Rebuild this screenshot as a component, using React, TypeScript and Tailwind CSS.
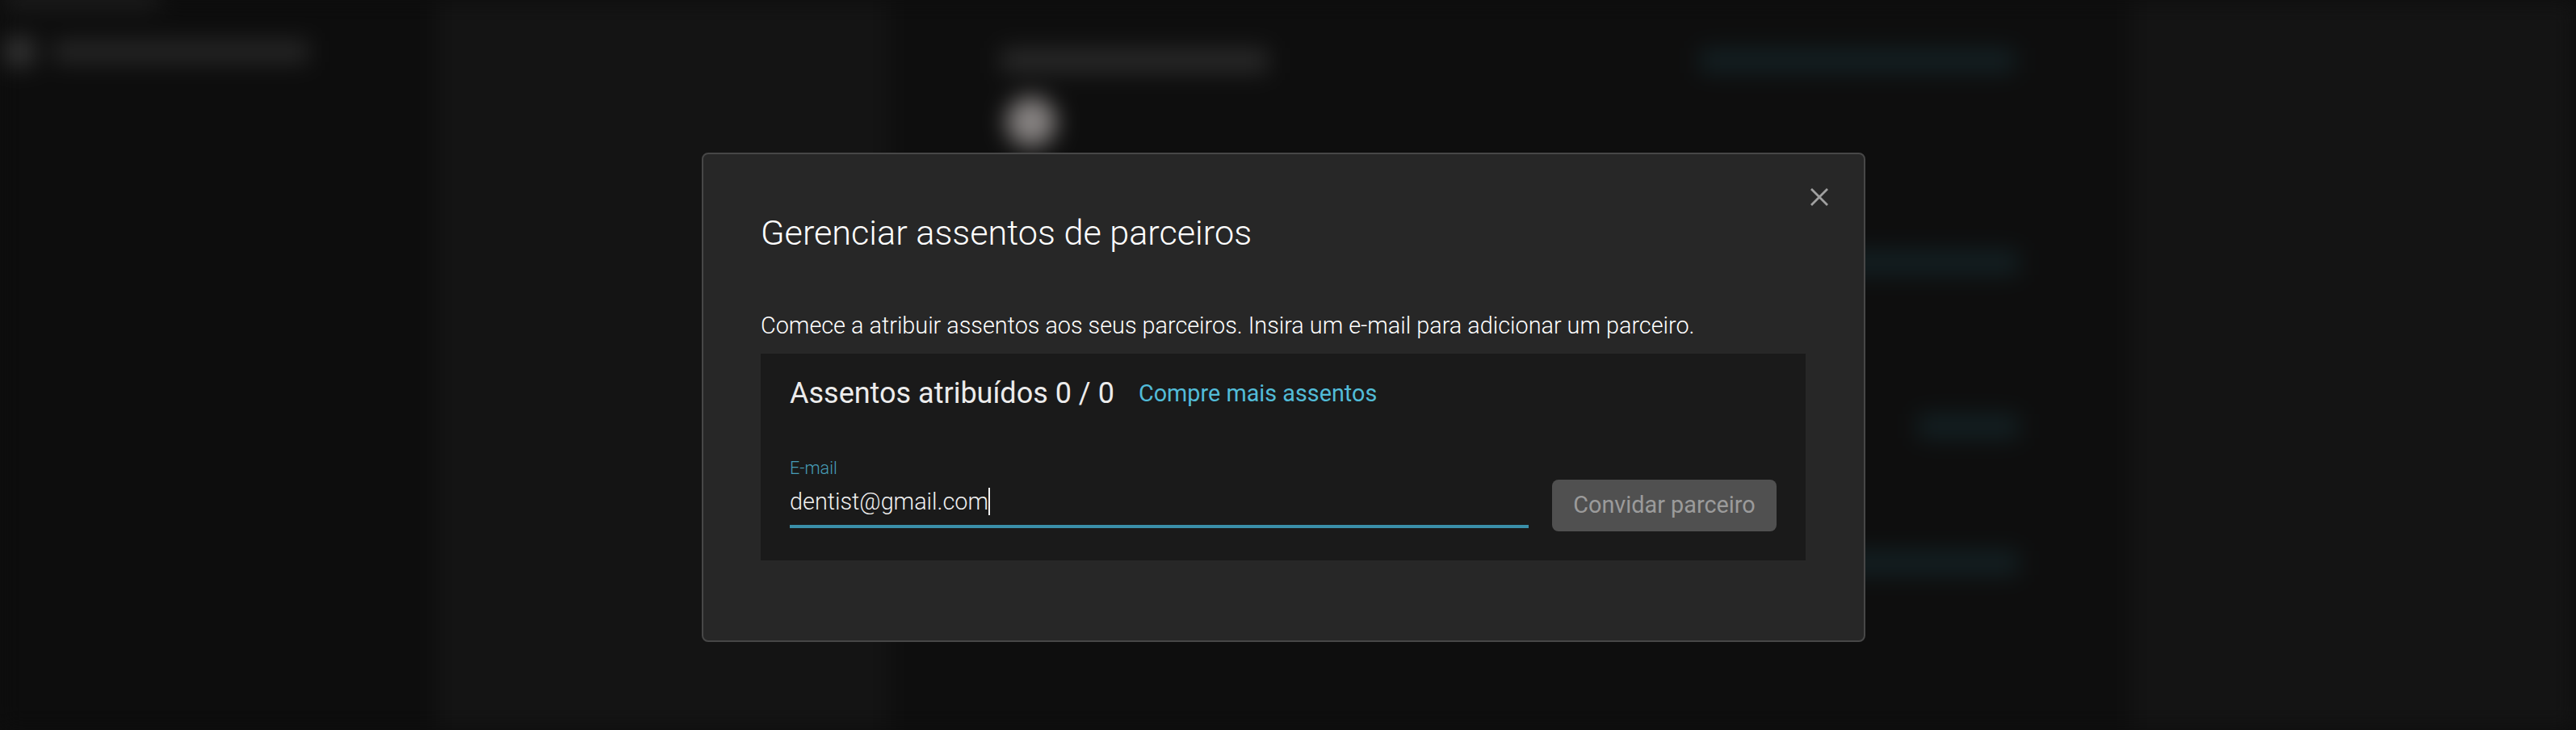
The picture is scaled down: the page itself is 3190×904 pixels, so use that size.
export default function App() {
  return (
    <div className="relative h-[904px] w-[3190px] overflow-hidden bg-[#0d0d0d] font-['Roboto',sans-serif]">
      {/* blurred page behind the dialog */}
      <div className="flex h-full w-full blur-[14px]">
        <aside className="flex h-full w-[540px] flex-col bg-[#0d0d0d]">
          <div className="ml-[6px] mt-[-8px] h-[16px] w-[190px] bg-[#242424]" />
          <div className="mt-[38px] flex items-center gap-[24px] pl-[6px]">
            <div className="h-[36px] w-[36px] bg-[#343434]" />
            <div className="h-[28px] w-[316px] bg-[#262626]" />
          </div>
        </aside>
        <div className="h-full w-[560px] bg-[#141414]" />
        <main className="h-full w-[1540px] bg-[#0e0e0e]">
          <div className="mt-[60px] flex items-center justify-between pl-[140px] pr-[145px]">
            <div className="h-[30px] w-[330px] bg-[#292929]" />
            <div className="h-[30px] w-[390px] bg-[#132023]" />
          </div>
          <div className="ml-[146px] mt-[30px] h-[62px] w-[62px] rounded-full bg-[#868281]" />
          <div className="ml-[1000px] mt-[128px] h-[30px] w-[400px] bg-[#132023]" />
          <div className="ml-[1275px] mt-[173px] h-[30px] w-[125px] bg-[#132023]" />
          <div className="ml-[1000px] mt-[139px] h-[30px] w-[400px] bg-[#132023]" />
        </main>
        <div className="h-full flex-1 bg-[#141414]" />
      </div>

      {/* dialog */}
      <div className="absolute inset-0 pl-[869px] pt-[189px]">
        <div className="relative flex h-[606px] w-[1441px] flex-col rounded-[8px] border-2 border-[#474747] bg-[#272727] px-[71px]">
          <button className="absolute right-[43px] top-[41px] text-[#a0a0a0]">
            <svg width="24" height="24" viewBox="0 0 24 24" fill="none" stroke="currentColor" strokeWidth="2.8" className="block">
              <path d="M2 2 L22 22 M22 2 L2 22" />
            </svg>
          </button>
          <h2 className="mt-[72px] text-[43.2px] font-light leading-[52px] text-white">Gerenciar assentos de parceiros</h2>
          <p className="mt-[64px] text-[28.8px] font-light leading-[48px] text-white">
            Comece a atribuir assentos aos seus parceiros. Insira um e-mail para adicionar um parceiro.
          </p>
          <section className="mt-[11px] h-[256px] w-[1294px] bg-[#1a1a1a] px-[36px]">
            <div className="flex items-center pt-[26px]">
              <span className="text-[36px] font-normal leading-[46px] text-[#ececec]">Assentos atribuídos 0 / 0</span>
              <a className="ml-[30px] text-[28.8px] font-normal leading-[46px] text-[#52bcd8]">Compre mais assentos</a>
            </div>
            <div className="mt-[54px] flex items-start gap-[29px]">
              <div className="w-[915px]">
                <div className="text-[21.6px] font-light leading-[32px] text-[#479db7]">E-mail</div>
                <div className="flex h-[58px] items-center border-b-4 border-[#3a8fa9] pb-[4px]">
                  <span className="text-[28.8px] font-light leading-[40px] text-[#f0f0f0]">dentist@gmail.com</span>
                  <span className="h-[34px] w-[2px] bg-[#f0f0f0]" />
                </div>
              </div>
              <button className="mt-[30px] h-[64px] w-[278px] rounded-[8px] bg-[#505050] text-[28.8px] font-normal text-[#9b9b9b]">
                Convidar parceiro
              </button>
            </div>
          </section>
        </div>
      </div>
    </div>
  );
}
